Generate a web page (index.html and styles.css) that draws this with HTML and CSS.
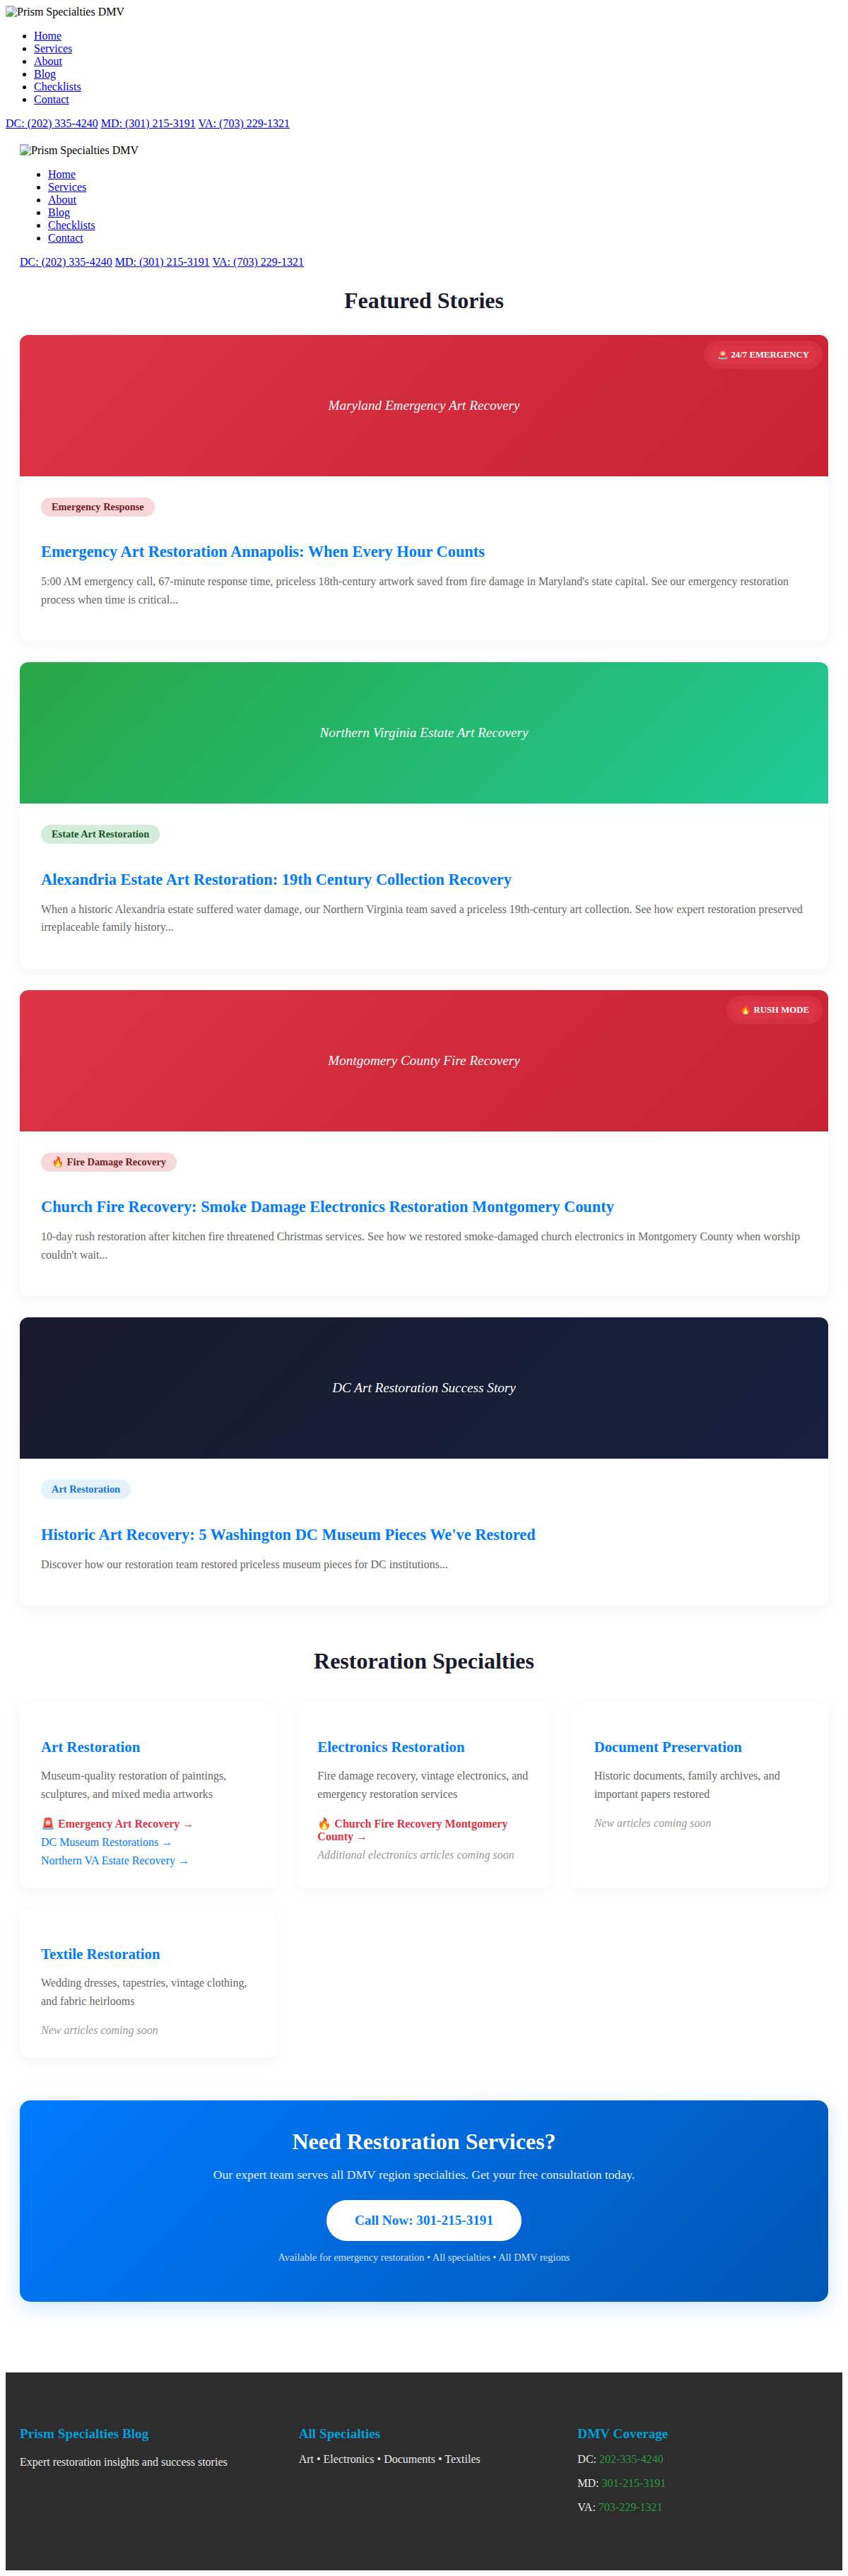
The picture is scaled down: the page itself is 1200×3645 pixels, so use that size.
FILE: index.html
```html
<!DOCTYPE html>
<html lang="en">
<head>
<meta charset="utf-8">
<title>Prism Specialties DMV Blog</title>
<link rel="stylesheet" href="styles.css">
</head>
<body>
<svg class="defs" width="0" height="0" aria-hidden="true">
  <symbol id="logo" viewBox="0 0 16 16">
    <path d="M0.5 0.5H11L15.5 5V15.5H0.5Z" fill="#c6d7f5" stroke="#a3a3a3"/>
    <path d="M2 5.5a1.5 1.5 0 0 1 2-1.4 2 2 0 0 1 3.6 .6A1.3 1.3 0 0 1 8 7H3a1.3 1.3 0 0 1-1-1.5Z" fill="#fff"/>
    <path d="M1 15C3 11 6 9 9 9.5L12 12 9 15Z" fill="#57a639"/>
    <path d="M8.5 16L16 8.500V11L11 16Z" fill="#fff"/>
    <path d="M11 0.5V5H15.5Z" fill="#fff" stroke="#a3a3a3"/>
    <path d="M12.5 15.5L15.5 12.5V15.5Z" fill="#57a639"/>
  </symbol>
</svg>

<header class="site-header">
  <div class="logo"><svg class="logo-mark"><use href="#logo"/></svg>Prism Specialties DMV</div>
  <ul class="nav">
    <li><a href="#">Home</a></li>
    <li><a href="#">Services</a></li>
    <li><a href="#">About</a></li>
    <li><a href="#">Blog</a></li>
    <li><a href="#">Checklists</a></li>
    <li><a href="#">Contact</a></li>
  </ul>
  <div class="phones"><a href="#">DC: (202) 335-4240</a> <a href="#">MD: (301) 215-3191</a> <a href="#">VA: (703) 229-1321</a></div>
</header>

<main class="container">
  <div class="logo"><svg class="logo-mark"><use href="#logo"/></svg>Prism Specialties DMV</div>
  <ul class="nav">
    <li><a href="#">Home</a></li>
    <li><a href="#">Services</a></li>
    <li><a href="#">About</a></li>
    <li><a href="#">Blog</a></li>
    <li><a href="#">Checklists</a></li>
    <li><a href="#">Contact</a></li>
  </ul>
  <div class="phones"><a href="#">DC: (202) 335-4240</a> <a href="#">MD: (301) 215-3191</a> <a href="#">VA: (703) 229-1321</a></div>

  <section class="featured">
    <h2 class="section-title">Featured Stories</h2>

    <article class="story">
      <div class="story-image red">Maryland Emergency Art Recovery<span class="badge">🚨 24/7 EMERGENCY</span></div>
      <div class="story-body">
        <span class="tag tag-red">Emergency Response</span>
        <h3 class="story-title"><a href="#">Emergency Art Restoration Annapolis: When Every Hour Counts</a></h3>
        <p class="excerpt">5:00 AM emergency call, 67-minute response time, priceless 18th-century artwork saved from fire damage in Maryland's state capital. See our emergency restoration process when time is critical...</p>
      </div>
    </article>

    <article class="story">
      <div class="story-image green">Northern Virginia Estate Art Recovery</div>
      <div class="story-body">
        <span class="tag tag-green">Estate Art Restoration</span>
        <h3 class="story-title"><a href="#">Alexandria Estate Art Restoration: 19th Century Collection Recovery</a></h3>
        <p class="excerpt">When a historic Alexandria estate suffered water damage, our Northern Virginia team saved a priceless 19th-century art collection. See how expert restoration preserved irreplaceable family history...</p>
      </div>
    </article>

    <article class="story">
      <div class="story-image red">Montgomery County Fire Recovery<span class="badge">🔥 RUSH MODE</span></div>
      <div class="story-body">
        <span class="tag tag-red">🔥 Fire Damage Recovery</span>
        <h3 class="story-title"><a href="#">Church Fire Recovery: Smoke Damage Electronics Restoration Montgomery County</a></h3>
        <p class="excerpt">10-day rush restoration after kitchen fire threatened Christmas services. See how we restored smoke-damaged church electronics in Montgomery County when worship couldn't wait...</p>
      </div>
    </article>

    <article class="story">
      <div class="story-image navy">DC Art Restoration Success Story</div>
      <div class="story-body">
        <span class="tag tag-blue">Art Restoration</span>
        <h3 class="story-title"><a href="#">Historic Art Recovery: 5 Washington DC Museum Pieces We've Restored</a></h3>
        <p class="excerpt">Discover how our restoration team restored priceless museum pieces for DC institutions...</p>
      </div>
    </article>
  </section>

  <section class="specialties">
    <h2 class="section-title">Restoration Specialties</h2>
    <div class="specialty-grid">
      <div class="specialty">
        <h3>Art Restoration</h3>
        <p>Museum-quality restoration of paintings, sculptures, and mixed media artworks</p>
        <div class="links">
          <a class="urgent" href="#">🚨 Emergency Art Recovery →</a>
          <a href="#">DC Museum Restorations →</a>
          <a href="#">Northern VA Estate Recovery →</a>
        </div>
      </div>
      <div class="specialty">
        <h3>Electronics Restoration</h3>
        <p>Fire damage recovery, vintage electronics, and emergency restoration services</p>
        <div class="links">
          <a class="urgent" href="#">🔥 Church Fire Recovery Montgomery County →</a>
          <span class="soon">Additional electronics articles coming soon</span>
        </div>
      </div>
      <div class="specialty">
        <h3>Document Preservation</h3>
        <p>Historic documents, family archives, and important papers restored</p>
        <div class="links"><span class="soon">New articles coming soon</span></div>
      </div>
      <div class="specialty">
        <h3>Textile Restoration</h3>
        <p>Wedding dresses, tapestries, vintage clothing, and fabric heirlooms</p>
        <div class="links"><span class="soon">New articles coming soon</span></div>
      </div>
    </div>
  </section>

  <section class="cta">
    <h2>Need Restoration Services?</h2>
    <p class="cta-lead">Our expert team serves all DMV region specialties. Get your free consultation today.</p>
    <a class="cta-button" href="#">Call Now: 301-215-3191</a>
    <p class="cta-note">Available for emergency restoration • All specialties • All DMV regions</p>
  </section>
</main>

<footer class="footer">
  <div class="footer-grid">
    <div>
      <h3>Prism Specialties Blog</h3>
      <p class="tagline">Expert restoration insights and success stories</p>
    </div>
    <div>
      <h3>All Specialties</h3>
      <p>Art • Electronics • Documents • Textiles</p>
    </div>
    <div>
      <h3>DMV Coverage</h3>
      <p>DC: <a href="#">202-335-4240</a></p>
      <p>MD: <a href="#">301-215-3191</a></p>
      <p>VA: <a href="#">703-229-1321</a></p>
    </div>
  </div>
</footer>
</body>
</html>
```

FILE: styles.css
```css
* { box-sizing: border-box; }

body {
  margin: 8px;
  font-family: "Liberation Serif", "Times New Roman", serif;
  font-size: 16px;
  color: #000;
  background: #fff;
}

.defs { position: absolute; }

.logo { display: flex; height: 18px; }
.logo-mark { width: 16px; height: 16px; }

.nav { margin: 16px 0; padding-left: 40px; }

.nav a, .phones a { color: #0000ee; }

.container { padding: 20px 20px 0; }

.section-title {
  margin: 26.56px 0 30px;
  font-size: 32px;
  text-align: center;
  color: #1a1a2e;
}

.story {
  margin-bottom: 30px;
  border-radius: 12px;
  overflow: hidden;
  background: #fff;
  box-shadow: 0 4px 20px rgba(0, 0, 0, 0.05);
}

.story-image {
  position: relative;
  display: flex;
  align-items: center;
  justify-content: center;
  height: 200px;
  font-size: 19.2px;
  font-style: italic;
  color: #fff;
}

.red { background: linear-gradient(135deg, #dc3545, #c82333); }
.green { background: linear-gradient(135deg, #28a745, #20c997); }
.navy { background: linear-gradient(135deg, #1a1a2e, #16213e); }

.badge {
  position: absolute;
  top: 15px;
  right: 15px;
  padding: 6px 12px;
  border-radius: 15px;
  background: #dc3545;
  box-shadow: 0 0 0 7px rgba(220, 53, 69, 0.7);
  font-size: 12.8px;
  line-height: 14px;
  font-style: normal;
  font-weight: bold;
}

.story-body { padding: 30px; }

.tag {
  display: inline-block;
  margin-bottom: 15px;
  padding: 5px 15px;
  border-radius: 15px;
  font-size: 14.4px;
  font-weight: bold;
}

.tag-red { background: #f8d7da; color: #721c24; }
.tag-green { background: #d4edda; color: #155724; }
.tag-blue { background: #e3f2fd; color: #1976d2; }

.story-title { margin: 22.4px 0 16px; font-size: 22.4px; }
.story-title a { color: #007bff; text-decoration: none; }

.excerpt { margin: 0 0 16px; line-height: 1.6; color: #666; }

.specialties { margin: 60px 0; }
.specialties .section-title { margin: 0 0 40px; }

.specialty-grid {
  display: grid;
  grid-template-columns: repeat(3, 1fr);
  gap: 30px;
}

.specialty {
  padding: 30px;
  border-radius: 12px;
  background: #fff;
  box-shadow: 0 4px 20px rgba(0, 0, 0, 0.05);
}

.specialty h3 { margin: 20.8px 0 16px; font-size: 20.8px; color: #007bff; }
.specialty p { margin: 0 0 20px; line-height: 1.6; color: #666; }

.links { display: flex; flex-direction: column; gap: 8px; }
.links a { color: #007bff; text-decoration: none; }
.links .urgent { color: #dc3545; font-weight: bold; }
.soon { color: #999; font-style: italic; }

.cta {
  padding: 40px;
  border-radius: 15px;
  background: linear-gradient(135deg, #007bff, #0056b3);
  box-shadow: 0 8px 30px rgba(0, 123, 255, 0.2);
  text-align: center;
  color: #fff;
}

.cta h2 { margin: 0 0 15px; font-size: 32px; }
.cta-lead { margin: 17.6px 0 25px; font-size: 17.6px; opacity: 0.9; }

.cta-button {
  display: inline-block;
  padding: 18px 40px;
  border-radius: 30px;
  background: #fff;
  color: #007bff;
  font-size: 19.2px;
  font-weight: bold;
  text-decoration: none;
}

.cta-note { margin: 15px 0 14.4px; font-size: 14.4px; opacity: 0.8; }

.footer {
  margin-top: 100px;
  padding: 57px 20px 64px;
  background: #2d2d2d;
  color: #fff;
}

.footer-grid {
  display: grid;
  grid-template-columns: repeat(3, 1fr);
  gap: 40px;
}

.footer h3 { margin: 19.2px 0 15px; font-size: 19.2px; color: #00a0dc; }
.footer p { margin: 16px 0; opacity: 0.9; }
.footer .tagline { line-height: 1.6; }
.footer a { color: #28a745; text-decoration: none; }
```
